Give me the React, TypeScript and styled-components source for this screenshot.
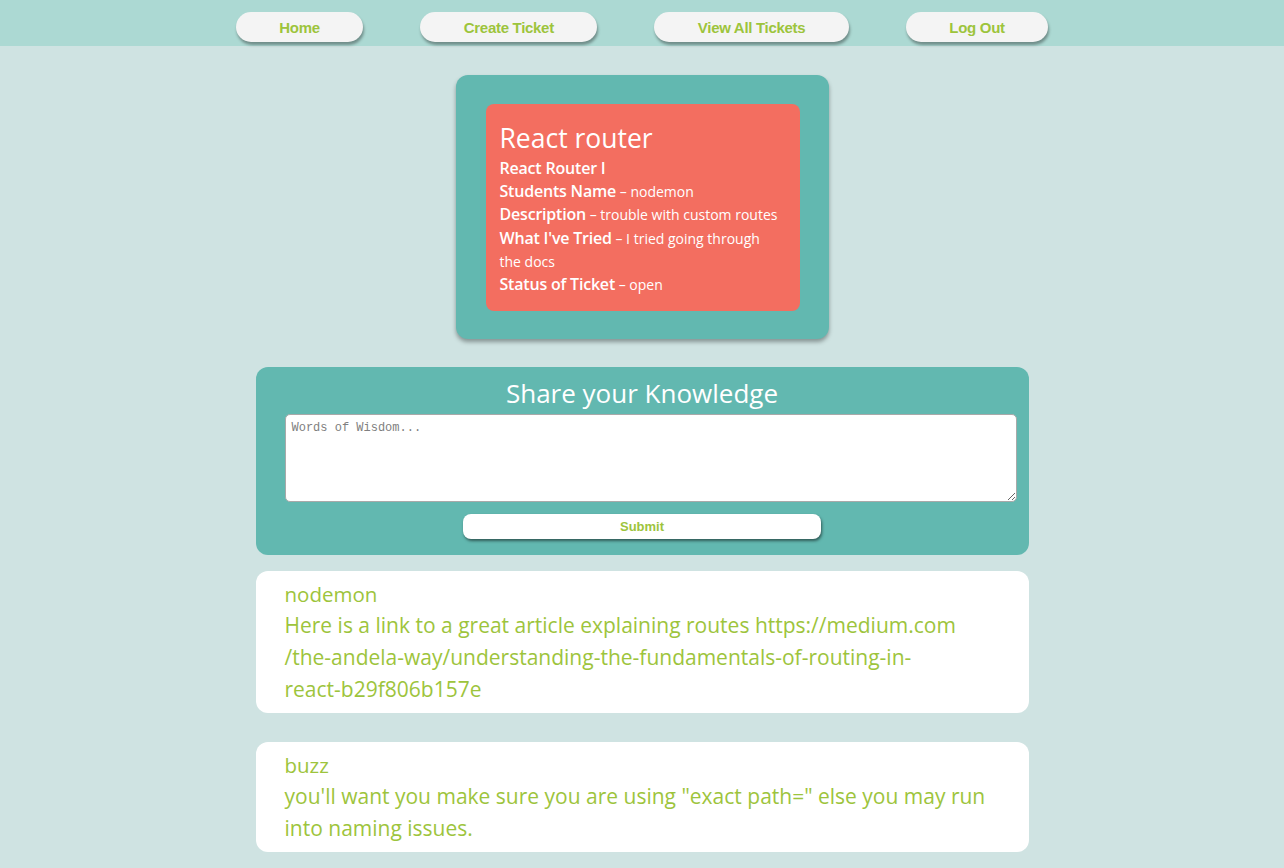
import React from "react";
import styled, { createGlobalStyle } from "styled-components";

const GlobalStyle = createGlobalStyle`
  html, body { margin: 0; padding: 0; }
  body {
    background: #cfe3e2;
    font-family: "Open Sans", "Liberation Sans", sans-serif;
  }
`;

const green = "#9dc43c";

const NavBar = styled.nav`
  height: 46px;
  box-sizing: border-box;
  padding-top: 12px;
  background: #acd9d3;
  display: flex;
  justify-content: center;
  align-items: flex-start;
`;

const NavButton = styled.button`
  height: 30px;
  margin: 0 28.5px;
  padding: 0 43.5px;
  border: none;
  border-radius: 15px;
  background: #f4f4f4;
  color: ${green};
  font-family: "Liberation Sans", Arial, sans-serif;
  font-weight: bold;
  font-size: 15px;
  letter-spacing: -0.3px;
  box-shadow: 1px 3px 3px rgba(0, 0, 0, 0.35);
  cursor: pointer;
`;

const Main = styled.main`
  display: flex;
  flex-direction: column;
  align-items: center;
  padding-top: 29px;
  padding-bottom: 40px;
`;

const TicketFrame = styled.section`
  width: 373px;
  box-sizing: border-box;
  padding: 29px 29px 28px 30px;
  background: #62b8b0;
  border-radius: 12px;
  box-shadow: 0 3px 4px rgba(0, 0, 0, 0.35);
`;

const TicketCard = styled.div`
  background: #f36e60;
  border-radius: 8px;
  padding: 18px 20px 15px 14px;
  color: #fff;
`;

const TicketTitle = styled.h2`
  margin: 0 0 3px;
  font-weight: 400;
  font-size: 26.5px;
  line-height: 32px;
`;

const TicketLine = styled.div`
  font-size: 14px;
  line-height: 23.2px;
`;

const Label = styled.strong`
  font-weight: 600;
  font-size: 16px;
  letter-spacing: -0.2px;
`;

const ShareCard = styled.section`
  margin-top: 28px;
  width: 773px;
  box-sizing: border-box;
  padding: 10px 12px 16px 29px;
  background: #62b8b0;
  border-radius: 12px;
  display: flex;
  flex-direction: column;
  align-items: stretch;
`;

const ShareTitle = styled.h3`
  margin: 0 0 4px;
  padding-right: 17px;
  text-align: center;
  color: #fff;
  font-weight: 400;
  font-size: 26px;
  line-height: 33px;
`;

const WisdomInput = styled.textarea`
  display: block;
  height: 88px;
  box-sizing: border-box;
  margin: 0;
  padding: 6px 6px;
  border: 1px solid #a9a9a9;
  border-radius: 5px;
  background: #fff;
  font-family: "Liberation Mono", "DejaVu Sans Mono", monospace;
  font-size: 12px;
  &::placeholder { color: #808080; }
`;

const SubmitButton = styled.button`
  align-self: center;
  margin: 12px 17px 0 0;
  width: 358px;
  height: 25px;
  border: none;
  border-radius: 8px;
  background: #fff;
  color: ${green};
  font-family: "Liberation Sans", Arial, sans-serif;
  font-weight: bold;
  font-size: 13px;
  box-shadow: 1px 2px 3px rgba(0, 0, 0, 0.5);
  cursor: pointer;
`;

const CommentCard = styled.article<{ $gap: number }>`
  margin-top: ${(p) => p.$gap}px;
  width: 773px;
  box-sizing: border-box;
  padding: 8px 30px 8px 29px;
  background: #fff;
  border-radius: 12px;
  color: ${green};
`;

const CommentUser = styled.div`
  font-size: 20.5px;
  line-height: 30px;
`;

const CommentText = styled.p`
  margin: 0;
  font-size: 21px;
  line-height: 32px;
`;

const Chunk = styled.span`
  white-space: nowrap;
`;

const navItems = ["Home", "Create Ticket", "View All Tickets", "Log Out"];

export default function App() {
  return (
    <>
      <GlobalStyle />
      <NavBar>
        {navItems.map((n) => (
          <NavButton key={n}>{n}</NavButton>
        ))}
      </NavBar>
      <Main>
        <TicketFrame>
          <TicketCard>
            <TicketTitle>React router</TicketTitle>
            <TicketLine>
              <Label>React Router I</Label>
            </TicketLine>
            <TicketLine>
              <Label>Students Name</Label> – nodemon
            </TicketLine>
            <TicketLine>
              <Label>Description</Label> – trouble with custom routes
            </TicketLine>
            <TicketLine>
              <Label>What I've Tried</Label> – I tried going through the docs
            </TicketLine>
            <TicketLine>
              <Label>Status of Ticket</Label> – open
            </TicketLine>
          </TicketCard>
        </TicketFrame>
        <ShareCard>
          <ShareTitle>Share your Knowledge</ShareTitle>
          <WisdomInput placeholder="Words of Wisdom..." />
          <SubmitButton>Submit</SubmitButton>
        </ShareCard>
        <CommentCard $gap={16}>
          <CommentUser>nodemon</CommentUser>
          <CommentText>
            Here is a link to a great article explaining routes{" "}
            <Chunk>https://medium.com</Chunk>
            <wbr />
            <Chunk>/the-andela-way/understanding-the-fundamentals-of-routing-in-</Chunk>
            <wbr />
            <Chunk>react-b29f806b157e</Chunk>
          </CommentText>
        </CommentCard>
        <CommentCard $gap={29}>
          <CommentUser>buzz</CommentUser>
          <CommentText>
            you'll want you make sure you are using "exact path=" else you may run into naming issues.
          </CommentText>
        </CommentCard>
      </Main>
    </>
  );
}
